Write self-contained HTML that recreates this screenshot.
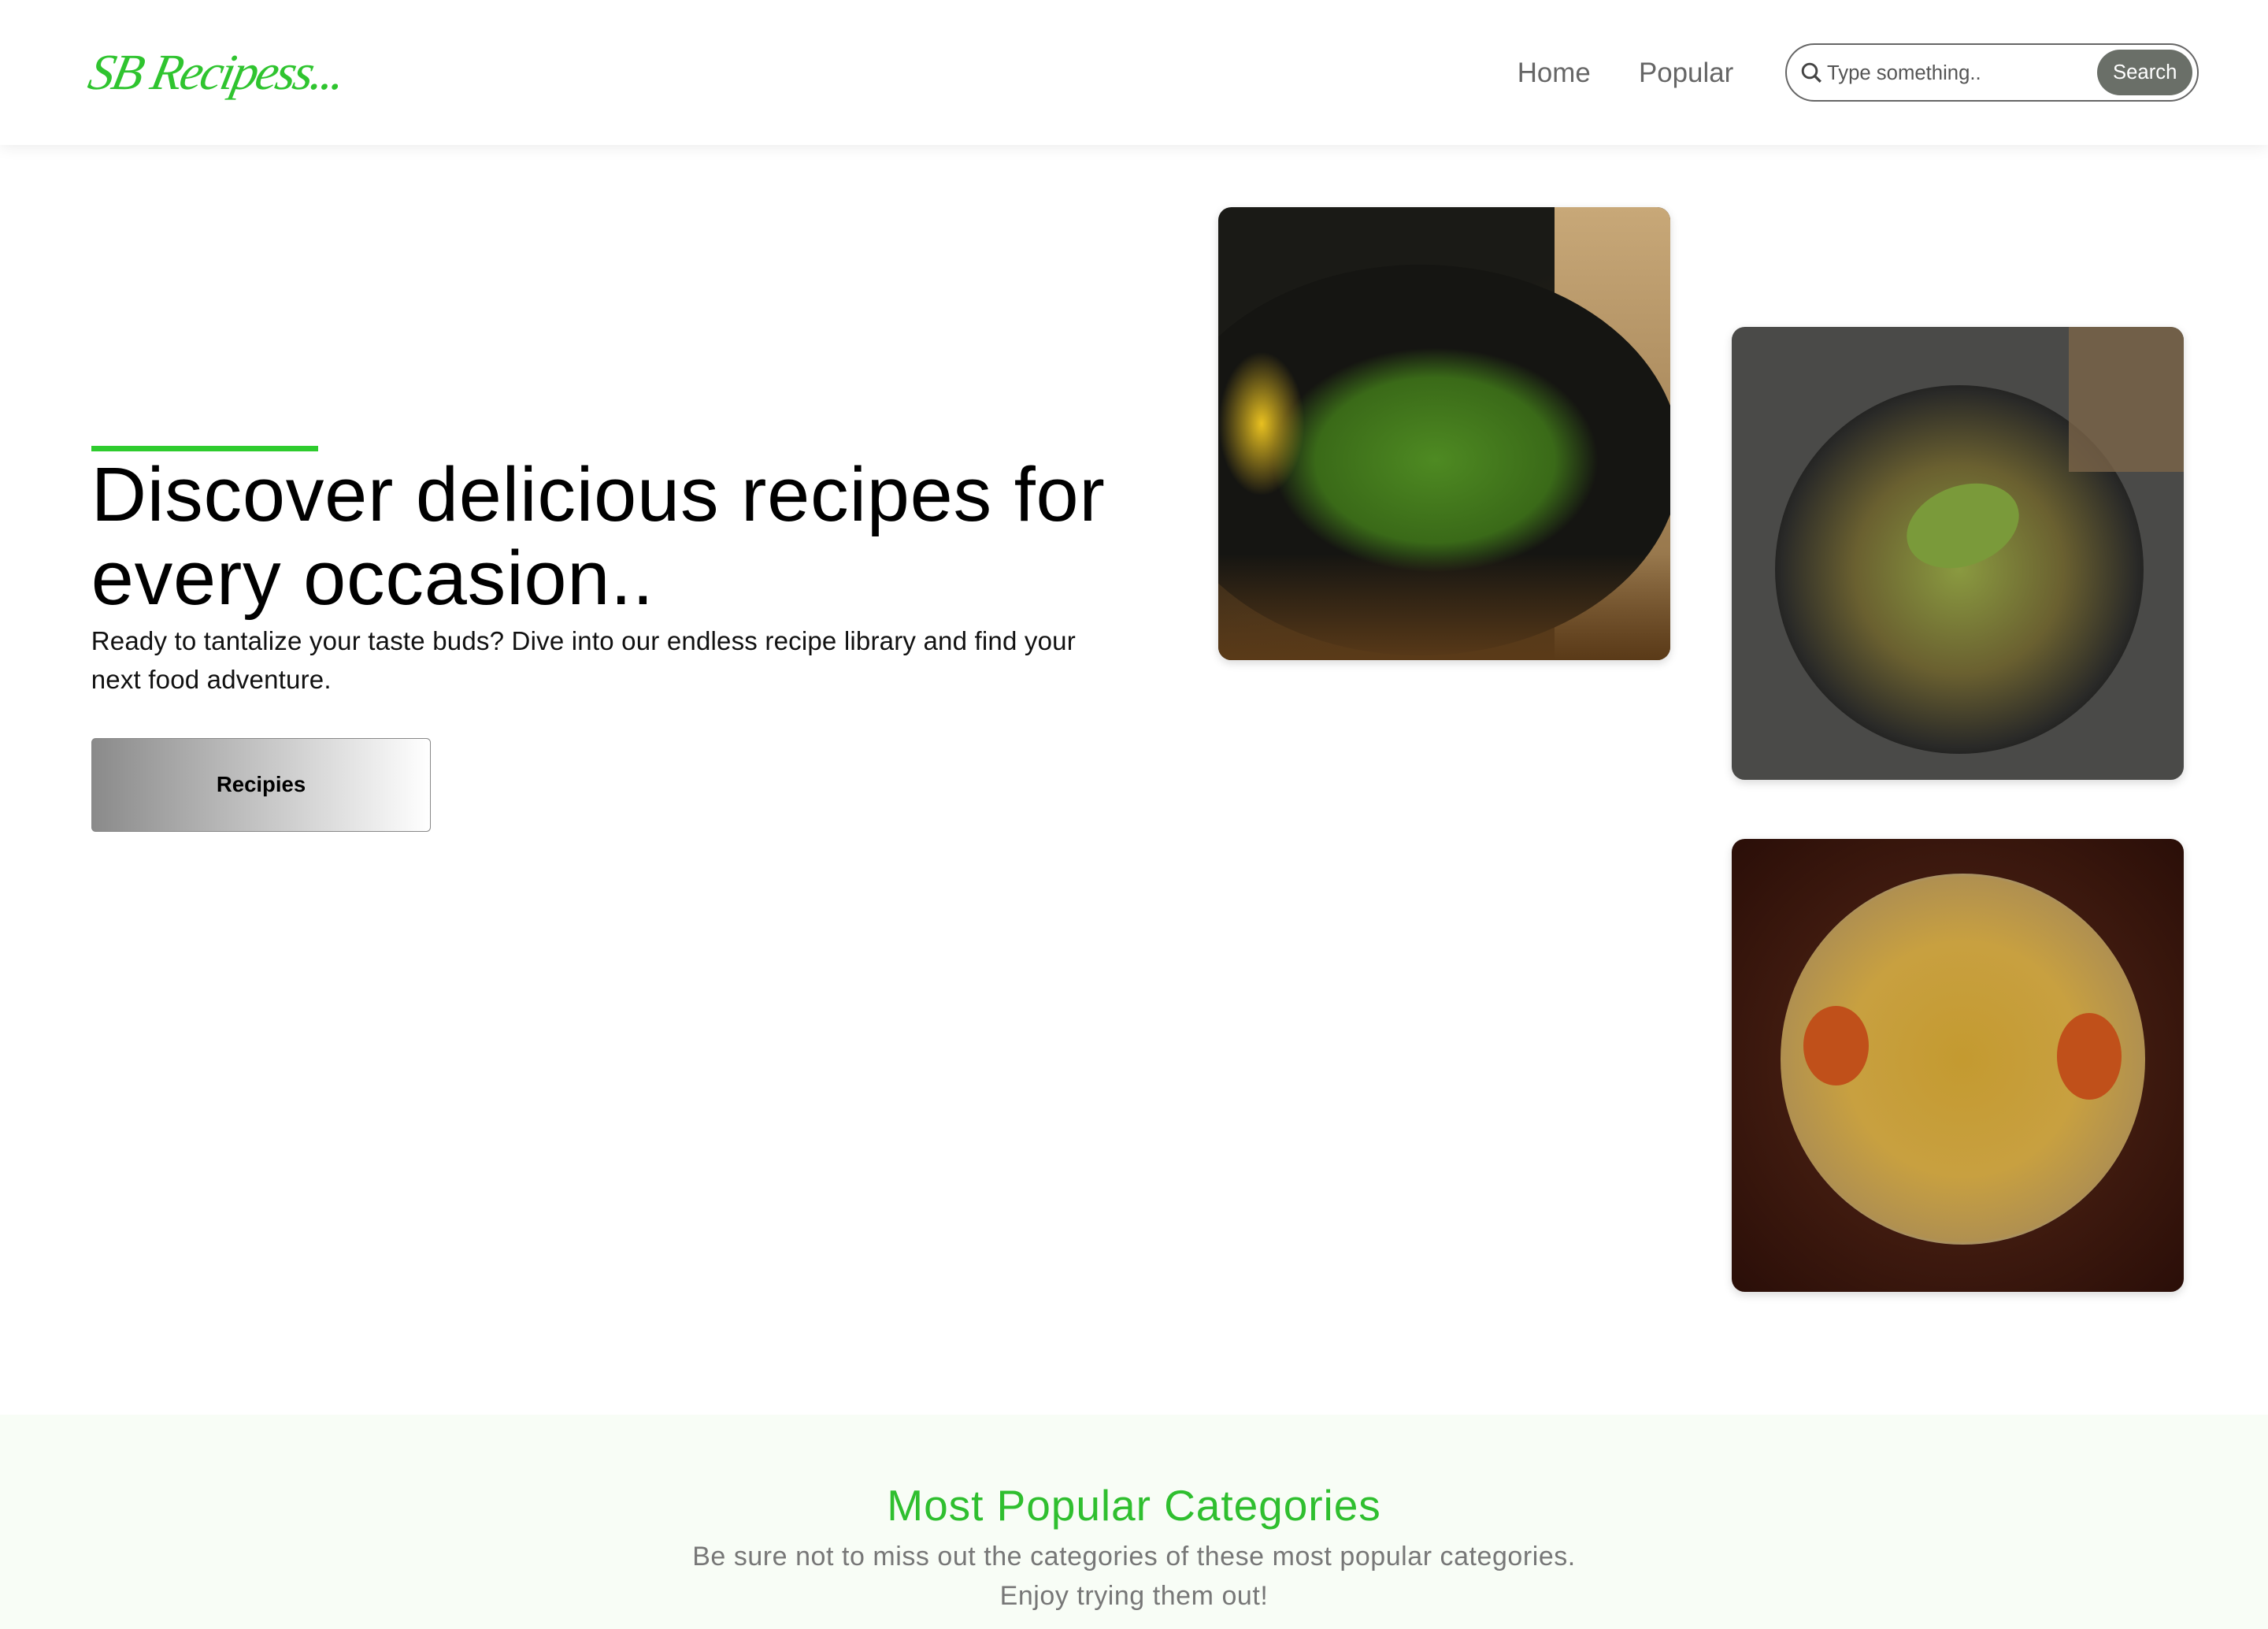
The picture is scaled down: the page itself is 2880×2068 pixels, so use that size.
<!DOCTYPE html>
<html><head><meta charset="utf-8"><style>
html,body{margin:0;padding:0;background:#fff;overflow:hidden}
body{width:1568px;height:1126px;zoom:1.83673;position:relative;font-family:"Liberation Sans",sans-serif}
.hdr{position:absolute;left:0;top:0;width:1568px;height:100px;background:#fff;box-shadow:0 2px 10px rgba(0,0,0,.08)}
.logo{position:absolute;left:62px;top:30px;font-family:"Liberation Serif",serif;font-style:italic;font-size:35px;color:#2fc42f;letter-spacing:-1.5px;transform:skewX(-12deg)}
.nav{position:absolute;top:40px;font-size:19px;color:#666}
.search{position:absolute;left:1234px;top:30px;width:286px;height:40px;border:1.5px solid #666;border-radius:21px;box-sizing:border-box}
.search span{position:absolute;left:28px;top:12px;font-size:14px;color:#555}
.search b{position:absolute;right:3px;top:3px;width:66px;height:32px;border-radius:16px;background:#6a6f68;color:#fff;font-weight:normal;font-size:14px;line-height:32px;text-align:center}
.bar{position:absolute;left:63px;top:308px;width:157px;height:4px;background:#2ecc2e}
h1{position:absolute;left:63px;top:313px;margin:0;font-weight:normal;font-size:53px;line-height:58px;color:#000;width:780px;letter-spacing:0.4px}
.p{position:absolute;left:63px;top:430px;width:700px;font-size:18px;line-height:27px;color:#111;letter-spacing:0.1px}
.btn{position:absolute;left:63px;top:510px;width:235px;height:65px;box-sizing:border-box;border:1px solid #888;border-radius:3px;background:linear-gradient(90deg,#8a8a8a,#fff);font-weight:bold;font-size:15px;text-align:center;line-height:63px}
.img{position:absolute;width:313px;height:313px;border-radius:9px;overflow:hidden;box-shadow:0 2px 6px rgba(0,0,0,.15)}
.sec{position:absolute;left:0;top:978px;width:1568px;height:150px;background:#f8fdf6}
.sec h2{margin:0;position:absolute;top:45px;width:100%;text-align:center;font-weight:normal;font-size:30px;color:#2fbf2f;letter-spacing:0.5px}
.sec p{margin:0;position:absolute;top:85px;width:100%;text-align:center;font-size:18.5px;line-height:27px;color:#777;letter-spacing:0.3px}
</style></head><body>
<div class="hdr">
<div class="logo">SB Recipess...</div>
<div class="nav" style="left:1049px">Home</div>
<div class="nav" style="left:1133px">Popular</div>
<div class="search"><svg style="position:absolute;left:10px;top:12px" width="15" height="15" viewBox="0 0 15 15"><circle cx="6" cy="6" r="4.8" fill="none" stroke="#444" stroke-width="1.6"/><path d="M9.5 9.5L13.5 13.5" stroke="#444" stroke-width="1.8"/></svg><span>Type something..</span><b>Search</b></div>
</div>
<div class="bar"></div>
<h1>Discover delicious recipes for every occasion..</h1>
<div class="p">Ready to tantalize your taste buds? Dive into our endless recipe library and find your next food adventure.</div>
<div class="btn">Recipies</div>

<div class="img" style="left:842px;top:143px;background:linear-gradient(160deg,#1a1a16 0,#1a1a16 30%,#5a4020 100%)">
<div style="position:absolute;right:0;top:0;width:80px;height:313px;background:linear-gradient(180deg,#c8a878,#8a6a40)"></div>
<div style="position:absolute;left:-40px;top:40px;width:360px;height:270px;border-radius:50%;background:#151512"></div>
<div style="position:absolute;left:0;top:60px;width:300px;height:230px;background:radial-gradient(ellipse 50% 45% at 50% 50%,#4e8a22,#3a6a18 55%,transparent 75%)"></div>
<div style="position:absolute;left:0;top:100px;width:60px;height:100px;background:radial-gradient(ellipse,#e8c020,transparent 70%)"></div>
<div style="position:absolute;left:0;top:240px;width:313px;height:73px;background:linear-gradient(180deg,transparent,#5a3a18)"></div></div>

<div class="img" style="left:1197px;top:226px;background:#4a4a48">
<div style="position:absolute;left:30px;top:40px;width:255px;height:255px;border-radius:50%;background:radial-gradient(circle at 50% 50%,#8a9a40 0,#6a6030 40%,#2a2a28 68%,#151515 78%)"></div>
<div style="position:absolute;left:120px;top:110px;width:80px;height:55px;border-radius:50%;background:#7a9a3a;transform:rotate(-20deg)"></div>
<div style="position:absolute;right:0;top:0;width:80px;height:100px;background:#7a6448;opacity:.8"></div></div>

<div class="img" style="left:1197px;top:580px;background:radial-gradient(circle at 50% 50%,#5a2a18,#2a0e08)">
<div style="position:absolute;left:34px;top:24px;width:252px;height:256px;border-radius:50%;background:radial-gradient(circle,#c49a30 0,#c8a040 45%,#b09050 70%,#999 74%,#777 76%,transparent 77%)"></div>
<div style="position:absolute;left:50px;top:115px;width:45px;height:55px;border-radius:50%;background:#c0501a"></div>
<div style="position:absolute;left:225px;top:120px;width:45px;height:60px;border-radius:50%;background:#c0501a"></div></div>

<div class="sec"><h2>Most Popular Categories</h2><p>Be sure not to miss out the categories of these most popular categories.<br>Enjoy trying them out!</p></div>
</body></html>
